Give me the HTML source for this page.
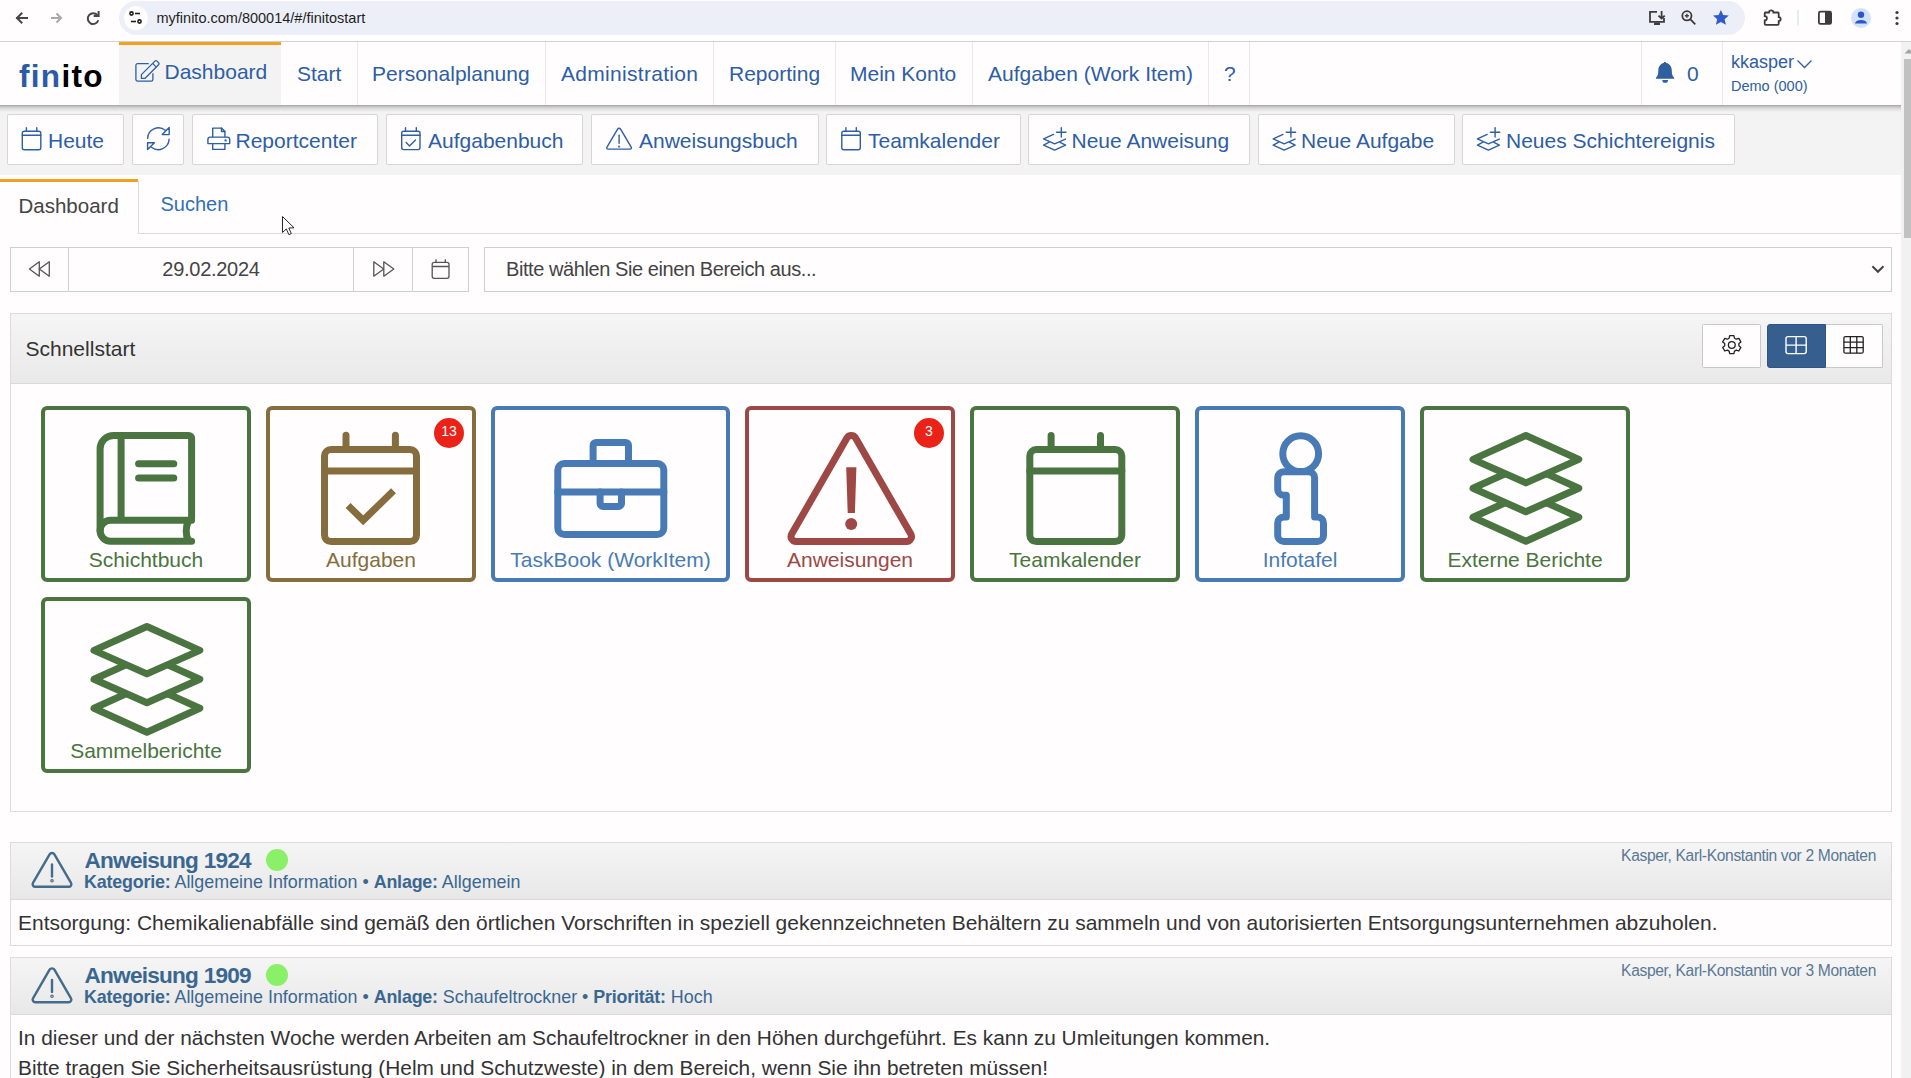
<!DOCTYPE html>
<html><head><meta charset="utf-8">
<style>
*{box-sizing:border-box;margin:0;padding:0}
html,body{width:1911px;height:1078px;overflow:hidden;background:#fffdfe;font-family:"Liberation Sans",sans-serif}
.a{position:absolute}
svg{position:absolute;overflow:visible}
.t{position:absolute;white-space:nowrap;line-height:1}
/* chrome */
#chrome{left:0;top:0;width:1911px;height:42px;background:#fffdfe;border-bottom:1px solid #d2d2d2}
#url{left:119px;top:1px;width:1626px;height:34px;border-radius:17px;background:#eceff7}
/* navbar */
#nav{z-index:2;left:0;top:42px;width:1901px;height:63px;background:#fffdfe}
.nsep{position:absolute;top:0;width:1px;height:63px;background:#e8e8e8}
.nt{position:absolute;top:21px;font-size:21px;color:#2d5ea6;white-space:nowrap;line-height:1}
/* toolbar */
#tb{left:0;top:105px;width:1901px;height:70px;background:#f3f3f3}
.btn{position:absolute;top:114px;height:51px;background:#fffdfe;border:1px solid #d6d6d6;border-radius:2px}
.bt{position:absolute;top:14.5px;font-size:21px;color:#2d5ea6;white-space:nowrap;line-height:1}
</style></head><body>

<!-- browser chrome -->
<div id="chrome" class="a"></div>
<div id="url" class="a"></div>
<div class="a" style="left:124px;top:6px;width:24px;height:24px;border-radius:12px;background:#fffdfe"></div>
<svg style="left:0;top:0" width="1911" height="41" viewBox="0 0 1911 41">
  <g fill="none" stroke="#474747" stroke-width="2" stroke-linecap="square">
    <path d="M27 18H17M21.5 13.5L17 18l4.5 4.5"/>
  </g>
  <g fill="none" stroke="#a8a8a8" stroke-width="2">
    <path d="M51 18H61M56.5 13.5L61 18l-4.5 4.5"/>
  </g>
  <g fill="none" stroke="#474747" stroke-width="2">
    <path d="M97.4 15.2A5.4 5.4 0 1 0 98.3 20.3"/>
    <path d="M98.6 12v3.9h-3.9" stroke-linecap="square"/>
  </g>
  <!-- site settings icon -->
  <g stroke="#1f1f1f" stroke-width="1.6" fill="none">
    <circle cx="131.5" cy="13.5" r="1.6"/>
    <path d="M135 13.5h5"/>
    <path d="M131 21.5h5"/>
    <circle cx="139.5" cy="21.5" r="1.6"/>
  </g>
  <!-- install -->
  <g fill="none" stroke="#3c3c3c" stroke-width="1.8">
    <path d="M1657 11.8H1650V21.8H1664V18"/>
    <path d="M1661.6 11V18.5M1658.5 15.6l3.1 3 3.1-3"/>
  </g>
  <rect x="1654" y="22.5" width="6" height="2.5" fill="#3c3c3c"/>
  <!-- zoom -->
  <g fill="none" stroke="#3c3c3c" stroke-width="1.8">
    <circle cx="1686.9" cy="15.8" r="4.6"/>
    <path d="M1690.2 19.2L1695.3 24.3"/>
    <path d="M1686.9 13.8v4M1684.9 15.8h4" stroke-width="1.4"/>
  </g>
  <!-- star -->
  <path d="M1720.9 10l2.3 5 5.6.5-4.2 3.7 1.3 5.6-5-2.9-5 2.9 1.3-5.6-4.2-3.7 5.6-.5z" fill="#2f5bcc"/>
  <!-- puzzle -->
  <path d="M1764.8 12.5h4.2a2.2 2.2 0 0 1 4.4 0h4.3a1 1 0 0 1 1 1v3.6a2 2 0 0 1 0 4v2.7a1 1 0 0 1-1 1h-12a1 1 0 0 1-1-1v-3.3a2 2 0 0 0 0-4.4v-2.6a1 1 0 0 1 1-1z" fill="none" stroke="#3c3c3c" stroke-width="1.8"/>
  <rect x="1797.5" y="10" width="1" height="15.5" fill="#c5dcf0"/>
  <!-- sidebar -->
  <rect x="1818.9" y="11.7" width="12.2" height="12.2" rx="1.5" fill="none" stroke="#3c3c3c" stroke-width="1.8"/>
  <rect x="1825" y="11.7" width="6" height="12.2" fill="#3c3c3c"/>
  <!-- profile -->
  <circle cx="1861" cy="18" r="10" fill="#d3e3fd"/>
  <circle cx="1861" cy="14.8" r="3.2" fill="#2b58c6"/>
  <path d="M1855 23.5a6 3.6 0 0 1 12 0z" fill="#2b58c6"/>
  <circle cx="1897" cy="12.5" r="1.6" fill="#3c3c3c"/>
  <circle cx="1897" cy="18" r="1.6" fill="#3c3c3c"/>
  <circle cx="1897" cy="23.5" r="1.6" fill="#3c3c3c"/>
</svg>
<div class="t" style="left:156.5px;top:11px;font-size:14.5px;color:#1f1f1f">myfinito.com/800014/#/finitostart</div>

<!-- navbar -->
<div id="nav" class="a">
  <div class="a" style="left:119px;top:0;width:162px;height:63px;background:#f3f3f3"></div>
  <div class="a" style="left:119px;top:0;width:162px;height:3px;background:#f2a11f"></div>
  <div class="t" style="left:19px;top:18.5px;font-size:31.5px;font-weight:700;letter-spacing:1.3px"><span style="color:#2a5ca5">fin</span><span style="color:#000">ito</span></div>
  <div class="nt" style="left:164.5px;top:19px">Dashboard</div>
  <div class="nsep" style="left:357px"></div>
  <div class="nsep" style="left:545px"></div>
  <div class="nsep" style="left:713px"></div>
  <div class="nsep" style="left:835px"></div>
  <div class="nsep" style="left:972px"></div>
  <div class="nsep" style="left:1208px"></div>
  <div class="nsep" style="left:1249px"></div>
  <div class="nsep" style="left:1641px"></div>
  <div class="nsep" style="left:1722px"></div>
  <div class="nt" style="left:297px">Start</div>
  <div class="nt" style="left:372px">Personalplanung</div>
  <div class="nt" style="left:561px;letter-spacing:0.3px">Administration</div>
  <div class="nt" style="left:729px">Reporting</div>
  <div class="nt" style="left:850px">Mein Konto</div>
  <div class="nt" style="left:988px">Aufgaben (Work Item)</div>
  <div class="nt" style="left:1224px">?</div>
  <div class="nt" style="left:1687px">0</div>
  <div class="t" style="left:1731px;top:11px;font-size:18px;color:#2d5ea6">kkasper</div>
  <div class="t" style="left:1731px;top:37px;font-size:14.5px;color:#2d5ea6">Demo (000)</div>
</div>
<svg style="left:0;top:0;z-index:3" width="1911" height="110" viewBox="0 0 1911 110">
  <!-- edit icon (tabler) -->
  <g fill="none" stroke="#2d5ea6" stroke-width="1.3" stroke-linejoin="round">
    <path d="M148.8 63.6H137.6a1.7 1.7 0 0 0-1.7 1.7V79.4a1.7 1.7 0 0 0 1.7 1.7H151.2a1.7 1.7 0 0 0 1.7-1.7V73.2"/>
    <path d="M141.4 74.6L154.9 61.1a1.5 1.5 0 0 1 2.1 0L158.6 62.7a1.5 1.5 0 0 1 0 2.1L145.1 78.3H141.4Z"/>
    <path d="M152.6 63.4L156.3 67.1"/>
  </g>
  <!-- bell -->
  <path d="M1665 61.9c.8 0 1.2.5 1.2 1.2 3.6.7 5.6 3.8 5.6 7.6 0 3.6.6 5.3 2.4 7v1.1h-18.3v-1.1c1.8-1.7 2.4-3.4 2.4-7 0-3.8 2-6.9 5.5-7.6 0-.7.4-1.2 1.2-1.2z" fill="#2e5f9e"/>
  <path d="M1662.3 80h5.7a2.85 2.85 0 0 1-5.7 0z" fill="#2e5f9e"/>
  <!-- chevron -->
  <path d="M1797.5 60.5l7 7 7-7" fill="none" stroke="#2d5ea6" stroke-width="1.3"/>
</svg>

<!-- toolbar -->
<div id="tb" class="a"></div>
<div class="a" style="z-index:2;left:0;top:105px;width:1901px;height:7px;background:linear-gradient(rgba(0,0,0,.32),rgba(0,0,0,.12) 40%,rgba(0,0,0,0))"></div>

<div class="btn" style="left:7px;width:117px"><div class="bt" style="left:40px">Heute</div></div>
<div class="btn" style="left:132px;width:52px"></div>
<div class="btn" style="left:192px;width:186px"><div class="bt" style="left:42.5px">Reportcenter</div></div>
<div class="btn" style="left:386px;width:197px"><div class="bt" style="left:41px">Aufgabenbuch</div></div>
<div class="btn" style="left:591px;width:228px"><div class="bt" style="left:47px">Anweisungsbuch</div></div>
<div class="btn" style="left:826px;width:195px"><div class="bt" style="left:41px">Teamkalender</div></div>
<div class="btn" style="left:1028px;width:222px"><div class="bt" style="left:42.5px">Neue Anweisung</div></div>
<div class="btn" style="left:1258px;width:197px"><div class="bt" style="left:42px">Neue Aufgabe</div></div>
<div class="btn" style="left:1462px;width:273px"><div class="bt" style="left:43px">Neues Schichtereignis</div></div>
<svg style="left:0;top:0" width="1911" height="180" viewBox="0 0 1911 180">
 <g fill="none" stroke="#2d5ea6" stroke-width="1.4" stroke-linecap="round" stroke-linejoin="round">
  <g id="cal"><rect x="22.3" y="131.3" width="18.5" height="18.5" rx="2"/><path d="M26.4 127.6v3.7M36.8 127.6v3.7M22.3 135.3h18.5"/></g>
  <!-- refresh -->
  <path d="M147.6 138.4A10.9 10.9 0 0 1 165.2 130.2"/>
  <path d="M162.2 134.6l7-7v7z"/>
  <path d="M169.1 139.3A10.9 10.9 0 0 1 151.5 147.3"/>
  <path d="M147.6 142.7h6.8l-6.8 6.9z"/>
  <!-- printer -->
  <path d="M212.7 136.8V128.1H221.5L224.9 131.5V136.8"/>
  <path d="M221.5 128.1v3.4h3.4"/>
  <path d="M207.9 143.6V139.4a2.3 2.3 0 0 1 2.3-2.3h17.2a2.3 2.3 0 0 1 2.3 2.3V143.6z"/>
  <path d="M212.7 143.6v5.8h12.2v-5.8"/>
  <circle cx="225.6" cy="140.4" r=".5"/>
  <!-- calendar check -->
  <rect x="401.7" y="131.3" width="18.3" height="18.3" rx="2"/><path d="M405.5 127.6v3.7M416.3 127.6v3.7M401.7 135.3h18.3"/>
  <path d="M406.2 142.6l3.3 3.3 6-6"/>
  <!-- alert -->
  <path d="M617.6 129.2a1.7 1.7 0 0 1 3 0l10.6 18a1.2 1.2 0 0 1-1 1.9h-22.2a1.2 1.2 0 0 1-1-1.9z"/>
  <path d="M619.1 135.2v8"/>
  <circle cx="619.1" cy="146.6" r=".4"/>
  <!-- teamkalender -->
  <use href="#cal" x="819.5"/>
  <!-- stack plus -->
  <g id="sp"><path d="M1053.4 134.4l-9.8 4.5 11 5 10.9-4.8"/><path d="M1049.2 142.2l-5.6 2.9 11 5 11-5-5.5-2.8"/><path d="M1061.3 127.6v9.4M1056.6 132.2h9.4"/></g>
  <use href="#sp" x="229.6"/>
  <use href="#sp" x="433.8"/>
 </g>
</svg>

<!-- tabs -->
<div class="a" style="left:0;top:179px;width:138px;height:3px;background:#f2a11f"></div>
<div class="a" style="left:138px;top:181px;width:1px;height:53px;background:#dcdcdc"></div>
<div class="a" style="left:138px;top:233px;width:1763px;height:1px;background:#dcdcdc"></div>
<div class="t" style="left:18.5px;top:195.5px;font-size:20.5px;color:#444">Dashboard</div>
<div class="t" style="left:160.5px;top:194.3px;font-size:20px;color:#3270b5">Suchen</div>
<!-- cursor -->
<svg style="left:281px;top:215px" width="14" height="22" viewBox="0 0 14 22"><path d="M1.5 1.5v16l3.8-3.6 2.6 5.8 2.4-1.1-2.5-5.6 5.2-.2z" fill="#fff" stroke="#111" stroke-width="0.9" stroke-linejoin="round"/></svg>

<!-- date row -->
<div class="a" style="left:10px;top:247px;width:459px;height:45px;border:1px solid #cfcfcf"></div>
<div class="a" style="left:68px;top:247px;width:1px;height:45px;background:#cfcfcf"></div>
<div class="a" style="left:353px;top:247px;width:1px;height:45px;background:#cfcfcf"></div>
<div class="a" style="left:412px;top:247px;width:1px;height:45px;background:#cfcfcf"></div>
<div class="t" style="left:69px;width:284px;text-align:center;top:258.5px;font-size:20px;letter-spacing:-0.28px;color:#444">29.02.2024</div>
<div class="a" style="left:484px;top:247px;width:1408px;height:45px;border:1px solid #cfcfcf"></div>
<div class="t" style="left:506px;top:258.5px;font-size:20px;letter-spacing:-0.42px;color:#444">Bitte wählen Sie einen Bereich aus...</div>
<svg style="left:0;top:240px" width="1911" height="60" viewBox="0 240 1911 60">
 <g fill="none" stroke="#555" stroke-width="1.3" stroke-linejoin="round">
  <path d="M39.3 261.8v14.4l-9.9-7.2z"/><path d="M49.3 261.8v14.4l-10-7.2z"/>
  <path d="M373.8 261.8v14.4l9.9-7.2z"/><path d="M383.8 261.8v14.4l10-7.2z"/>
  <rect x="432.2" y="262.3" width="16.8" height="16" rx="2"/><path d="M436 259.2v3M445.3 259.2v3M432.2 266.5h16.8"/>
 </g>
 <path d="M1872.4 266.2l5.5 5.6 5.6-5.6" fill="none" stroke="#444" stroke-width="2"/>
</svg>


<!-- panel -->
<div class="a" style="left:10px;top:313px;width:1882px;height:499px;border:1px solid #dcdcdc;background:#fffdfe"></div>
<div class="a" style="left:11px;top:314px;width:1880px;height:70px;background:linear-gradient(#f5f5f5,#e9e9e9);border-bottom:1px solid #d9d9d9"></div>
<div class="t" style="left:25.5px;top:338px;font-size:21px;color:#333">Schnellstart</div>
<div class="a" style="left:1702px;top:324px;width:59px;height:44px;background:#fffdfe;border:1px solid #c8c8c8;border-radius:1.5px"></div>
<div class="a" style="left:1767px;top:324px;width:59px;height:44px;background:#365f8f;border:1px solid #2f5483;border-radius:3px 0 0 3px"></div>
<div class="a" style="left:1826px;top:324px;width:57px;height:44px;background:#fffdfe;border:1px solid #c8c8c8;border-left:none;border-radius:0 1.5px 1.5px 0"></div>
<svg style="left:0;top:0" width="1911" height="400" viewBox="0 0 1911 400">
 <g fill="none" stroke="#222" stroke-width="1.3" stroke-linejoin="round">
  <path d="M1729.7 335.6h4.2l.6 2.6 1.8 1 2.5-.9 2.1 3.6-2 1.7v2.1l2 1.7-2.1 3.6-2.5-.9-1.8 1-.6 2.6h-4.2l-.6-2.6-1.8-1-2.5.9-2.1-3.6 2-1.7v-2.1l-2-1.7 2.1-3.6 2.5.9 1.8-1z"/>
  <circle cx="1731.8" cy="345" r="3.4"/>
 </g>
 <g fill="none" stroke="#fff" stroke-width="1.4">
  <rect x="1786" y="336.6" width="20.2" height="17" rx="2"/><path d="M1796.1 336.6v17M1786 345.1h20.2"/>
 </g>
 <g fill="none" stroke="#222" stroke-width="1.3">
  <rect x="1843.9" y="336.6" width="19.3" height="16.6" rx="1.5"/><path d="M1850.3 336.6v16.6M1856.8 336.6v16.6M1843.9 342.1h19.3M1843.9 347.6h19.3"/>
 </g>
</svg>

<!-- tiles -->
<style>
.tile{position:absolute;border:4px solid;border-radius:6px;background:#fffdfe}
.tl{position:absolute;left:0;right:0;text-align:center;top:139px;font-size:21px;white-space:nowrap;line-height:1}
.g{border-color:#4a7540;color:#4a7540}
.br{border-color:#856d3d;color:#856d3d}
.bl{border-color:#487bb5;color:#487bb5}
.rd{border-color:#9e4845;color:#9e4845}
.badge{position:absolute;width:30px;height:30px;border-radius:15px;background:#eb2218;color:#fff;font-size:14px;line-height:27px;text-align:center}
</style>
<div class="tile g" style="left:41px;top:406px;width:210px;height:176px"><div class="tl">Schichtbuch</div></div>
<div class="tile br" style="left:266px;top:406px;width:210px;height:176px"><div class="tl">Aufgaben</div></div>
<div class="tile bl" style="left:491px;top:406px;width:239px;height:176px"><div class="tl">TaskBook (WorkItem)</div></div>
<div class="tile rd" style="left:745px;top:406px;width:210px;height:176px"><div class="tl">Anweisungen</div></div>
<div class="tile g" style="left:970px;top:406px;width:210px;height:176px"><div class="tl">Teamkalender</div></div>
<div class="tile bl" style="left:1195px;top:406px;width:210px;height:176px"><div class="tl">Infotafel</div></div>
<div class="tile g" style="left:1420px;top:406px;width:210px;height:176px"><div class="tl">Externe Berichte</div></div>
<div class="tile g" style="left:41px;top:597px;width:210px;height:176px"><div class="tl">Sammelberichte</div></div>
<div class="badge" style="left:434px;top:418px">13</div>
<div class="badge" style="left:914px;top:418px">3</div>
<svg style="left:0;top:0" width="1911" height="800" viewBox="0 0 1911 800">
 <g fill="none" stroke-width="7" stroke-linecap="round" stroke-linejoin="round">
  <!-- book -->
  <g stroke="#4a7540" transform="translate(96.6 431.9)">
   <path d="M95 88.4H14a10.5 10.5 0 0 0 0 21H95"/>
   <path d="M3.5 98.9V17A13.5 13.5 0 0 1 17 3.5H92a3 3 0 0 1 3 3V86"/>
   <path d="M24.5 3.5V88.4" stroke-linecap="butt"/>
   <path d="M42 31.9H77.2M42 46H77.2"/>
   <path d="M91.5 90C89 95 89 103 91.5 108"/>
  </g>
  <!-- calendar check -->
  <g stroke="#856d3d" transform="translate(321 431.7)">
   <rect x="3.5" y="17.8" width="92" height="92.1" rx="6.5"/>
   <path d="M3.5 39.3H95.5M25 3.5V17.8M74.4 3.5V17.8"/>
   <path d="M27.1 73.8L42.2 88.6L72.5 59.1" stroke-linecap="butt" stroke-linejoin="miter"/>
  </g>
  <!-- briefcase -->
  <g stroke="#487bb5" transform="translate(554.3 438.9)">
   <rect x="3.5" y="24.6" width="106" height="71" rx="6.5"/>
   <path d="M38.8 24.6V6.5a3 3 0 0 1 3-3H71.2a3 3 0 0 1 3 3V24.6"/>
   <path d="M3.5 53.1H109.5"/>
   <path d="M45.8 53.1V64.5a3 3 0 0 0 3 3H64.2a3 3 0 0 0 3-3V53.1"/>
  </g>
  <!-- triangle -->
  <g stroke="#9e4845" transform="translate(787.5 432.1)">
   <path d="M59.41 5.85A5 5 0 0 1 68.09 5.85L123.3 102.01A5 5 0 0 1 118.96 109.5L8.54 109.5A5 5 0 0 1 4.2 102.01Z"/>
  </g>
  <path d="M846.2 467.2h10.2l-1.5 45.8h-7.2z" fill="#9e4845" stroke="none"/>
  <circle cx="851.2" cy="524" r="6" fill="#9e4845" stroke="none"/>
  <!-- calendar -->
  <g stroke="#4a7540" transform="translate(1026.3 431.9)">
   <rect x="3.5" y="17.7" width="92" height="92" rx="6.5"/>
   <path d="M3.5 39.1H95.5M24.8 3.5V17.7M74.2 3.5V17.7"/>
  </g>
  <!-- info -->
  <g stroke="#487bb5">
   <circle cx="1300.7" cy="453.7" r="17.9"/>
   <path d="M1283.7 471.7H1308.6a6 6 0 0 1 6 6V517H1317.5a6 6 0 0 1 6 6V535.4a6 6 0 0 1-6 6H1283.7a6 6 0 0 1-6-6V523a6 6 0 0 1 6-6H1286.3V495.3H1283.7a6 6 0 0 1-6-6V477.7a6 6 0 0 1 6-6z" fill="#fffdfe"/>
  </g>
  <!-- layers -->
  <g id="lay" stroke="#4a7540" fill="#fffdfe" transform="translate(1469.4 431.9)">
   <path d="M56.5 61.5L109.4 85.4L56.5 109.4L3.6 85.4z"/>
   <path d="M56.5 32.5L109.4 56.4L56.5 79.9L3.6 56.4z"/>
   <path d="M56.5 3.6L109.4 27.5L56.5 51L3.6 27.5z"/>
  </g>
  <g stroke="#4a7540" fill="#fffdfe" transform="translate(90.4 622.9)">
   <path d="M56.5 61.5L109.4 85.4L56.5 109.4L3.6 85.4z"/>
   <path d="M56.5 32.5L109.4 56.4L56.5 79.9L3.6 56.4z"/>
   <path d="M56.5 3.6L109.4 27.5L56.5 51L3.6 27.5z"/>
  </g>
 </g>
</svg>


<!-- cards -->
<style>
.card{position:absolute;left:10px;width:1882px;border:1px solid #dcdcdc;background:#fffdfe}
.ch{position:absolute;left:0;top:0;width:1880px;height:57px;background:linear-gradient(#f5f5f5,#e8e8e8);border-bottom:1px solid #d9d9d9}
.ttl{position:absolute;left:73.5px;top:7.3px;font-size:22.6px;font-weight:700;letter-spacing:-0.76px;color:#3a6791;white-space:nowrap;line-height:1}
.meta{position:absolute;left:73px;top:31px;font-size:17.9px;color:#3a6791;white-space:nowrap;line-height:1}
.meta b{letter-spacing:-0.2px}
.who{position:absolute;right:15px;top:5.3px;font-size:15.6px;letter-spacing:-0.35px;color:#5a7894;white-space:nowrap;line-height:1}
.dot{position:absolute;left:255px;top:6px;width:22px;height:22px;border-radius:11px;background:#8af067}
.body{position:absolute;left:7px;font-size:20.9px;color:#333;white-space:nowrap;line-height:30px}
</style>
<div class="card" style="top:842px;height:104px">
 <div class="ch">
  <div class="ttl">Anweisung 1924</div><div class="dot"></div>
  <div class="meta"><b>Kategorie:</b> Allgemeine Information • <b>Anlage:</b> Allgemein</div>
  <div class="who">Kasper, Karl-Konstantin vor 2 Monaten</div>
 </div>
 <div class="body" style="top:65px;font-size:20.97px">Entsorgung: Chemikalienabfälle sind gemäß den örtlichen Vorschriften in speziell gekennzeichneten Behältern zu sammeln und von autorisierten Entsorgungsunternehmen abzuholen.</div>
</div>
<div class="card" style="top:957px;height:140px">
 <div class="ch">
  <div class="ttl">Anweisung 1909</div><div class="dot"></div>
  <div class="meta"><b>Kategorie:</b> Allgemeine Information • <b>Anlage:</b> Schaufeltrockner • <b>Priorität:</b> Hoch</div>
  <div class="who">Kasper, Karl-Konstantin vor 3 Monaten</div>
 </div>
 <div class="body" style="top:65px;font-size:20.85px">In dieser und der nächsten Woche werden Arbeiten am Schaufeltrockner in den Höhen durchgeführt. Es kann zu Umleitungen kommen.<br>Bitte tragen Sie Sicherheitsausrüstung (Helm und Schutzweste) in dem Bereich, wenn Sie ihn betreten müssen!</div>
</div>
<svg style="left:0;top:0" width="1911" height="1078" viewBox="0 0 1911 1078">
 <g id="warn" fill="none" stroke="#456b8c" stroke-width="2.4" stroke-linejoin="round" stroke-linecap="round">
  <path d="M49.6 854.3a2.8 2.8 0 0 1 4.8 0l16.6 28.6a2.6 2.6 0 0 1-2.3 3.9H35.3a2.6 2.6 0 0 1-2.3-3.9z"/>
  <path d="M52 864.5v12"/>
  <circle cx="52" cy="880.8" r=".6"/>
 </g>
 <use href="#warn" y="115.4"/>
</svg>
<!-- scrollbar -->
<div class="a" style="left:1901px;top:42px;width:10px;height:1036px;background:#f1f1f1"></div>
<div class="a" style="left:1904px;top:59px;width:7px;height:179px;background:#c1c1c1"></div>
<svg style="left:1901px;top:42px" width="10" height="14" viewBox="0 0 10 14"><path d="M3.5 11.5L8 7l4.5 4.5z" fill="#a3a3a3"/></svg>

</body></html>
